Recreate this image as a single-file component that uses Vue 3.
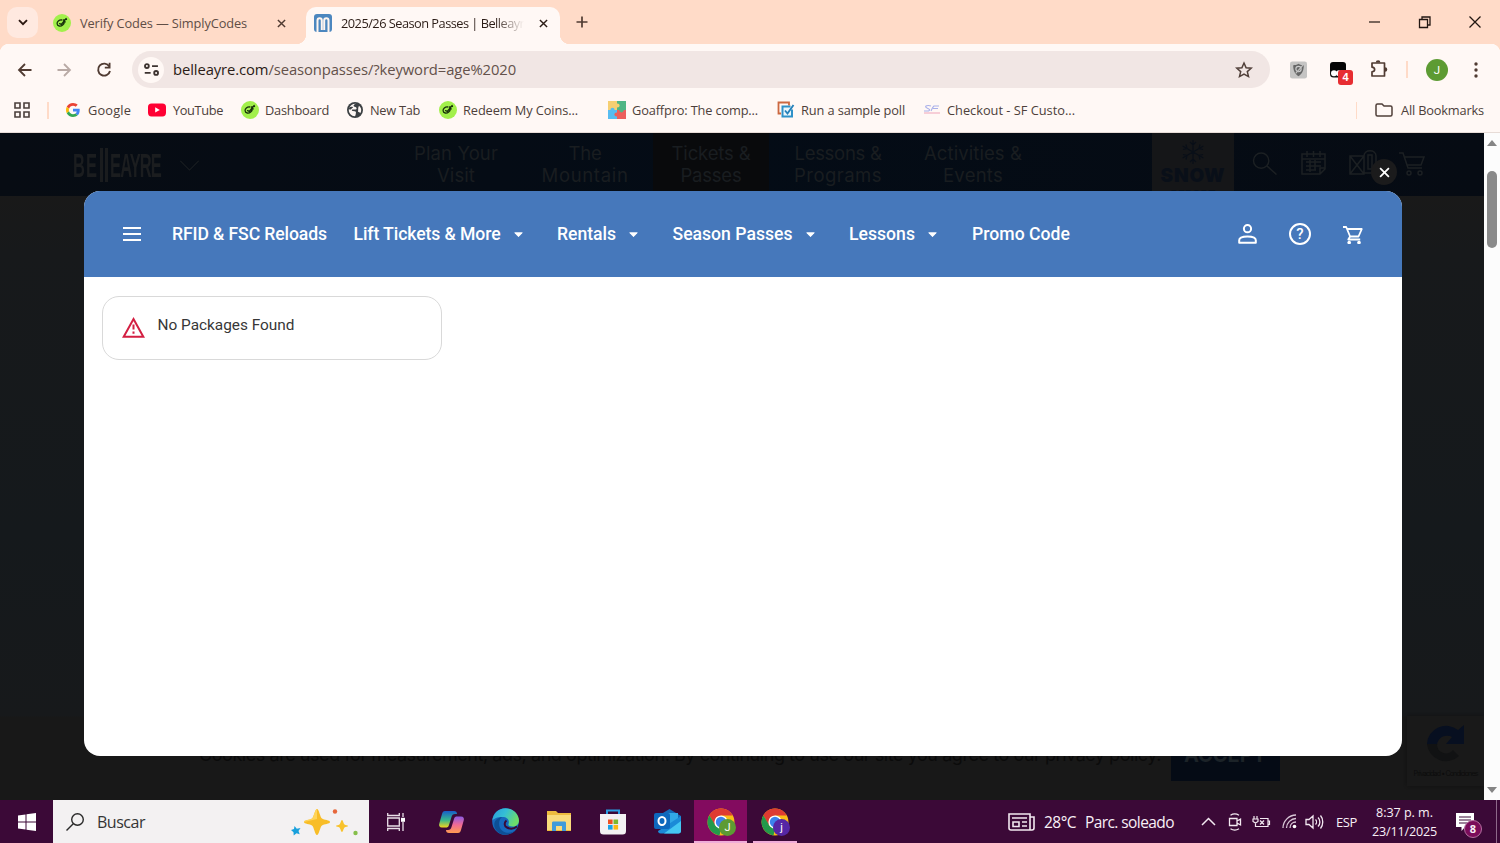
<script setup>
// Tracks a label out or in so that it fills the given width in pixels.
const vFit = {
  mounted(el, { value }) {
    const natural = el.getBoundingClientRect().width
    el.style.letterSpacing = `${(value - natural) / el.textContent.length}px`
  },
}

const bookmarks = [
  { icon: 'google', label: 'Google', w: 43, cls: 'b-google' },
  { icon: 'youtube', label: 'YouTube', w: 50, cls: 'b-youtube' },
  { icon: 'simply', label: 'Dashboard', w: 64, cls: 'b-dash' },
  { icon: 'globe', label: 'New Tab', w: 50, cls: 'b-newtab' },
  { icon: 'simply', label: 'Redeem My Coins...', w: 115, cls: 'b-redeem' },
  { icon: 'puzzle', label: 'Goaffpro: The comp...', w: 126, cls: 'b-goaff' },
  { icon: 'poll', label: 'Run a sample poll', w: 104, cls: 'b-poll' },
  { icon: 'sf', label: 'Checkout - SF Custo...', w: 128, cls: 'b-sf' },
]

const siteNav = [
  { a: 'Plan Your', aw: 84, b: 'Visit', bw: 38, cls: 'n1' },
  { a: 'The', aw: 33, b: 'Mountain', bw: 87, cls: 'n2' },
  { a: 'Tickets &', aw: 79, b: 'Passes', bw: 61, cls: 'n3' },
  { a: 'Lessons &', aw: 87, b: 'Programs', bw: 88, cls: 'n4' },
  { a: 'Activities &', aw: 98, b: 'Events', bw: 60, cls: 'n5' },
]

const storeNav = [
  { label: 'RFID & FSC Reloads', w: 155, cell: 'm1' },
  { label: 'Lift Tickets & More', w: 147, cell: 'm2', menu: true },
  { label: 'Rentals', w: 59, cell: 'm3', menu: true },
  { label: 'Season Passes', w: 120, cell: 'm4', menu: true },
  { label: 'Lessons', w: 66, cell: 'm5', menu: true },
  { label: 'Promo Code', w: 98, cell: 'm6' },
]
</script>

<template>
  <div class="screen">
    <svg class="defs" width="0" height="0">
      <defs>
        <symbol id="simply" viewBox="0 0 18 18">
          <circle cx="9" cy="9" r="9" fill="#a2f04b" />
          <path d="M8.900 6C6 5.700 3.900 7.600 4.100 9.800c.2 2.600 3.600 2.900 5.600 1.200 1.300-1.100 1.700-2.500 1.600-3.800M6.600 9.600l1.700.7 4.900-5.800M10.600 6l2.900-.6M10.800 8.200l1.500-.4" fill="none" stroke="#17310b" stroke-width="1.300" stroke-linecap="round" stroke-linejoin="round" />
        </symbol>
        <symbol id="google" viewBox="0 0 48 48">
          <path fill="#EA4335" d="M24 9.500c3.540 0 6.710 1.220 9.210 3.600l6.850-6.850C35.900 2.380 30.470 0 24 0 14.620 0 6.510 5.380 2.560 13.220l7.980 6.190C12.430 13.720 17.740 9.500 24 9.500z" />
          <path fill="#4285F4" d="M46.980 24.550c0-1.570-.15-3.090-.38-4.550H24v9.020h12.940c-.58 2.960-2.260 5.480-4.780 7.180l7.730 6c4.510-4.180 7.090-10.360 7.090-17.650z" />
          <path fill="#FBBC05" d="M10.530 28.590c-.48-1.450-.76-2.990-.76-4.590s.27-3.140.76-4.590l-7.980-6.190C.92 16.460 0 20.120 0 24s.92 7.540 2.560 10.780l7.970-6.190z" />
          <path fill="#34A853" d="M24 48c6.480 0 11.930-2.130 15.890-5.810l-7.730-6c-2.150 1.450-4.920 2.300-8.160 2.300-6.260 0-11.570-4.220-13.470-9.910l-7.980 6.190C6.510 42.620 14.620 48 24 48z" />
        </symbol>
        <symbol id="youtube" viewBox="0 0 18 18">
          <rect x="0" y="2.400" width="18" height="13" rx="3.600" fill="#ff0033" />
          <path d="M7.200 6.200v5.400l4.600-2.700z" fill="#fff" />
        </symbol>
        <symbol id="globe" viewBox="0 0 16 16">
          <circle cx="8" cy="8" r="8" fill="#3c4043" />
          <path d="M9 1.700C6.800 2 6 3.600 7 4.600c.8.700 2 .3 2.500 1.300.4.900-.5 1.600-1.600 1.600H5.500c-1 .2-.8 1.500.2 1.600l2 .2c1.100 0 1.400.9 1.200 1.600-.3 1 .1 2-1.100 3.400C4.400 14 1.800 11.300 1.800 8c0-.6.1-1.200.3-1.800C3 3.400 5.600 1.500 9 1.700z" fill="#fff8f5" />
          <path d="M2.300 5.500C4 4 4.700 5.300 6.200 4.800 6 6 4.800 6 4.200 7.200 3.500 8 2.600 7 1.800 7.200z" fill="#3c4043" />
          <path d="M12 3.800c1.400 1.100 2.200 2.500 2.200 4.200 0 1.200-.3 2.300-1 3.300-.6-1.100-1.200-1.200-2.200-1.500.4-2-.2-4.200 1-6z" fill="#fff8f5" />
        </symbol>
        <symbol id="puzzle" viewBox="0 0 18 18">
          <rect width="9" height="9" fill="#f6cf72" /><rect x="9" width="9" height="9" fill="#4fb684" />
          <rect y="9" width="9" height="9" fill="#58bdf1" /><rect x="9" y="9" width="9" height="9" fill="#ec5f5c" />
          <circle cx="9.500" cy="4.500" r="2.100" fill="#f6cf72" /><circle cx="4.500" cy="8.800" r="2.100" fill="#58bdf1" />
          <circle cx="8.500" cy="13.500" r="2.100" fill="#ec5f5c" /><circle cx="13.500" cy="9.300" r="2.100" fill="#4fb684" />
        </symbol>
        <symbol id="poll" viewBox="0 0 18 18">
          <path d="M4 12.500H1.500V1.500H12v3" fill="none" stroke="#cc6840" stroke-width="1.800" />
          <path d="M15 8.500v7H5.500v-10h8" fill="#eaf6fc" stroke="#2f91c8" stroke-width="2" />
          <path d="M8 9.500l2.500 3L16.500 4" fill="none" stroke="#2581ba" stroke-width="1.900" />
        </symbol>
        <symbol id="sf" viewBox="0 0 18 18">
          <path d="M8 5C5 4 1.500 4.800 3 6.300S8.500 8.300 5.500 10H1M16 5h-5c-2 1.500-2 3.500-3 5M10 7.500h5" fill="none" stroke="#a9b0ea" stroke-width="1.100" />
          <path d="M1 12h16" stroke="#f3b6c6" stroke-width="1.300" />
        </symbol>
        <symbol id="cross" viewBox="0 0 10 10"><path d="M1 1l8 8M9 1L1 9" fill="none" stroke="currentColor" stroke-width="1.600" /></symbol>
        <symbol id="cart" viewBox="0 0 20 18">
          <path d="M0 1h3.200l3.900 9.500h8.400L18.800 3H4.200M7.100 10.500L5.300 13.500h11.900" fill="none" stroke="currentColor" stroke-width="1.800" stroke-linejoin="round" />
          <circle cx="6.200" cy="16.500" r="1.800" fill="currentColor" /><circle cx="16" cy="16.500" r="1.800" fill="currentColor" />
        </symbol>
        <symbol id="chrome" viewBox="0 0 28 28">
          <circle cx="14" cy="14" r="13.500" fill="#f9bd16" />
          <path d="M14 .5A13.500 13.500 0 0 1 25.700 7.500H14L8 17.500 2.300 7.200A13.500 13.500 0 0 1 14 .5z" fill="#df3b31" />
          <path d="M2.300 7.200L8.400 17.500 14 20.500 12.500 27.400A13.500 13.500 0 0 1 2.300 7.200z" fill="#239a4b" />
          <circle cx="14" cy="14" r="6.600" fill="#fff" /><circle cx="14" cy="14" r="5.200" fill="#3d83ec" />
        </symbol>
      </defs>
    </svg>

    <!-- Tab strip -->
    <header class="tabs">
      <button class="tab-search"><svg viewBox="0 0 10 7"><path d="M1 1.200l4 4 4-4" fill="none" stroke="#2b1710" stroke-width="1.900" /></svg></button>
      <div class="tab idle">
        <svg class="fav"><use href="#simply" /></svg>
        <span v-fit="167" class="t1">Verify Codes — SimplyCodes</span>
        <svg class="x"><use href="#cross" /></svg>
      </div>
      <div class="tab active">
        <svg class="fav" viewBox="0 0 18 18"><rect width="18" height="18" rx="3" fill="#4c87bf" /><path d="M3.500 18V6.500c0-3 4.300-3 4.300 0V16M10.200 16V6.500c0-3 4.300-3 4.300 0V18" fill="none" stroke="#fff6f0" stroke-width="2" /></svg>
        <span class="title-wrap"><span v-fit="190" class="t2">2025/26 Season Passes | Belleayre</span></span>
        <svg class="x"><use href="#cross" /></svg>
      </div>
      <svg class="plus" viewBox="0 0 12 12"><path d="M6 .5v11M.5 6h11" stroke="#503b32" stroke-width="1.700" /></svg>
      <svg class="winctl" viewBox="0 0 112 14">
        <path d="M0 7h11" stroke="#221712" stroke-width="1.200" />
        <path d="M50.500 4.500h8v8h-8zM53 4V2h8v8h-2" fill="none" stroke="#221712" stroke-width="1.300" />
        <path d="M100.500 1.500l11 11M111.500 1.500l-11 11" stroke="#221712" stroke-width="1.300" />
      </svg>
    </header>

    <!-- Toolbar and bookmarks -->
    <section class="chrome">
      <div class="toolbar">
        <svg class="arrow back" viewBox="0 0 14 14"><path d="M13.500 7H1.500M7 1L1 7l6 6" fill="none" stroke="#503b32" stroke-width="1.800" /></svg>
        <svg class="arrow fwd" viewBox="0 0 14 14"><path d="M.5 7h12M7 1l6 6-6 6" fill="none" stroke="#b9aaa5" stroke-width="1.800" /></svg>
        <svg class="reload" viewBox="0 0 14 15"><path d="M12.300 4.500A6 6 0 1 0 13 9" fill="none" stroke="#503b32" stroke-width="1.900" /><path d="M13.500.8v5.700H7.800V4.800h3.900V.8z" fill="#503b32" /></svg>
        <div class="omni">
          <div class="site"><svg viewBox="0 0 14 12"><g fill="none" stroke="#3d3330" stroke-width="1.700"><circle cx="2.700" cy="2.800" r="1.800" /><path d="M7.500 2.800H13M.7 9.200h5.500" /><circle cx="11.300" cy="9.200" r="1.800" /></g></svg></div>
          <span v-fit="343" class="url"><b>belleayre.com</b>/seasonpasses/?keyword=age%2020</span>
          <svg class="star" viewBox="0 0 18 18"><path d="M9 2l2.100 4.700 5.100.5-3.900 3.400 1.200 5L9 13l-4.500 2.600 1.200-5-3.900-3.400 5.100-.5z" fill="none" stroke="#503f39" stroke-width="1.500" /></svg>
        </div>
        <svg class="ext shield" viewBox="0 0 18 18"><rect width="18" height="18" rx="2.500" fill="#c5c4c3" /><path d="M9 2.500c2 1.200 3.600 1.500 5.600 1.500 0 5-1.300 9-5.600 11.500C4.700 13 3.400 9 3.400 4 5.400 4 7 3.700 9 2.500z" fill="#676767" /><circle cx="9" cy="8" r="2.800" fill="none" stroke="#ccc" stroke-width="1.200" /><path d="M6 12.500l8-9" stroke="#c5c4c3" stroke-width="1.200" /></svg>
        <div class="ext mask">
          <svg viewBox="0 0 16 16"><path d="M3 0h10a3 3 0 0 1 3 3v9H0V3a3 3 0 0 1 3-3z" fill="#050505" /><path d="M0 9v3a3.500 3.500 0 0 0 3.500 3.500H8V9z" fill="#111" /><circle cx="4" cy="11.300" r="3" fill="#fff" /><circle cx="9" cy="11.300" r="3" fill="#fff" /></svg>
          <span class="count">4</span>
        </div>
        <svg class="ext puzzle" viewBox="0 0 18 20"><path d="M2 4h12.500v13H2v-4.200c3.500-.3 3.500-4.300 0-4.600z" fill="none" stroke="#503b32" stroke-width="1.700" stroke-linejoin="round" /><path d="M5.800 3.500a2.300 2.300 0 0 1 4.600 0zM15 8.200a2.300 2.300 0 0 1 0 4.600z" fill="#503b32" /></svg>
        <i class="sep s1"></i>
        <div class="avatar">J</div>
        <svg class="dots" viewBox="0 0 4 16"><g fill="#503b32"><circle cx="2" cy="2" r="1.700" /><circle cx="2" cy="8" r="1.700" /><circle cx="2" cy="14" r="1.700" /></g></svg>
      </div>
      <nav class="marks">
        <svg class="apps" viewBox="0 0 16 16"><g fill="none" stroke="#4b3f3b" stroke-width="1.600"><path d="M1 1h5v5H1zM10 1h5v5h-5zM1 10h5v5H1zM10 10h5v5h-5z" /></g></svg>
        <i class="sep s2"></i>
        <a v-for="b in bookmarks" :key="b.label" :class="['mark', b.cls]">
          <svg><use :href="'#' + b.icon" /></svg><span v-fit="b.w">{{ b.label }}</span>
        </a>
        <i class="sep s3"></i>
        <a class="mark all">
          <svg viewBox="0 0 18 14"><path d="M1 11.500v-9C1 1.500 1.500 1 2.500 1H7l2 2h6.500c1 0 1.500.5 1.500 1.500v7c0 1-.5 1.500-1.500 1.500h-13C1.500 13 1 12.500 1 11.500z" fill="none" stroke="#503f39" stroke-width="1.500" /></svg>
          <span v-fit="83">All Bookmarks</span>
        </a>
      </nav>
    </section>

    <!-- Dimmed site with store dialog -->
    <main class="view">
      <div class="page">
        <div class="site-head">
          <div class="logo"><span v-fit="25">BE</span><i></i><i></i><span v-fit="51">EAYRE</span></div>
          <svg class="chev" viewBox="0 0 22 12"><path d="M1 1l10 10L21 1" fill="none" stroke="currentColor" stroke-width="1.200" /></svg>
          <div v-for="n in siteNav" :key="n.a" :class="['sn', n.cls]"><span v-fit="n.aw">{{ n.a }}</span><span v-fit="n.bw">{{ n.b }}</span></div>
          <div class="snow">
            <svg viewBox="0 0 24 24"><path d="M12 0v24M1.600 6l20.800 12M1.600 18L22.400 6M9 2l3 3 3-3M9 22l3-3 3 3M2 9.500l4-1-1-4M22 14.500l-4 1 1 4M2 14.500l4 1-1 4M22 9.500l-4-1 1-4" fill="none" stroke="currentColor" stroke-width="1.200" /></svg>
            <strong v-fit="65">SNOW</strong><small v-fit="45">REPORT</small>
          </div>
          <svg class="hi search" viewBox="0 0 26 24"><circle cx="9" cy="9" r="8" /><path d="M15 14.500l10 9" /></svg>
          <svg class="hi cal" viewBox="0 0 27 26"><path d="M2 4h23v15l-5 5H2zM2 9h23M7 1v6M13.500 1v6M20 1v6M6 12h15M6 16h15M6 20h10M10 10v12M15 10v10M25 18h-5v6" /></svg>
          <svg class="hi map" viewBox="0 0 28 26"><path d="M1 6h14v18H1zM1 6l14 18M15 6L1 24M15 6c0-7 12-7 12 0v17H15" /><path d="M19 5h4v14h-4z" /></svg>
          <svg class="hi shop" viewBox="0 0 26 24"><path d="M0 1h4l5 15h14M5 5h20l-3 8H8" /><circle cx="10" cy="21" r="2" /><circle cx="21" cy="21" r="2" /></svg>
        </div>
        <div class="cookies">
          <span v-fit="962" class="notice">Cookies are used for measurement, ads, and optimization. By continuing to use our site you agree to our privacy policy.</span>
          <div class="accept"><span v-fit="82">ACCEPT</span></div>
          <div class="captcha">
            <svg viewBox="0 0 42 42"><path d="M2 20A19 19 0 0 1 33 6l6-5v19H21l6-7a10 10 0 0 0-15 8z" fill="#070f20" /><path d="M2 20h10a9 9 0 0 0 16 6l6 6A19 19 0 0 1 2 20z" fill="#111213" /></svg>
            <span v-fit="64">Privacidad • Condiciones</span>
          </div>
        </div>

        <div class="dialog">
          <div class="bar">
            <svg class="burger" viewBox="0 0 18 14"><path d="M0 1h18M0 7h18M0 13h18" stroke="#fff" stroke-width="2" /></svg>
            <a v-for="m in storeNav" :key="m.label" :class="['item', m.cell]">
              <span v-fit="m.w">{{ m.label }}</span>
              <svg v-if="m.menu" viewBox="0 0 10 6"><path d="M.8.800h8.400L5 5.200z" fill="#fff" stroke="#fff" stroke-width="1" stroke-linejoin="round" /></svg>
            </a>
            <svg class="user" viewBox="0 0 19 20"><g fill="none" stroke="#fff" stroke-width="2"><circle cx="9.500" cy="4.700" r="3.600" /><path d="M1.200 18.800v-2.600c0-5 16.600-5 16.600 0v2.600z" stroke-linejoin="round" /></g></svg>
            <div class="help">?</div>
            <svg class="basket"><use href="#cart" /></svg>
          </div>
          <div class="card">
            <svg viewBox="0 0 23 21"><path d="M11.500 2L21.300 19.700H1.700z" fill="none" stroke="#d31f42" stroke-width="2" /><path d="M11.500 7.500v5M11.500 14.500v2.200" stroke="#d31f42" stroke-width="2" /></svg>
            <span v-fit="137">No Packages Found</span>
          </div>
        </div>
        <button class="close"><svg><use href="#cross" /></svg></button>
      </div>
      <aside class="scroll">
        <svg class="up" viewBox="0 0 10 6"><path d="M0 6l5-6 5 6z" fill="#858585" /></svg>
        <i></i>
        <svg class="down" viewBox="0 0 10 6"><path d="M0 0l5 6 5-6z" fill="#858585" /></svg>
      </aside>
    </main>

    <!-- Taskbar -->
    <footer class="taskbar">
      <svg class="win" viewBox="0 0 18 18"><path d="M0 2.500l7.500-1v7H0zM8.500 1.300L18 0v8.500H8.500zM0 9.500h7.500v7L0 15.500zM8.500 9.500H18V18l-9.500-1.300z" fill="#fff" /></svg>
      <div class="find">
        <svg class="lens" viewBox="0 0 18 18"><circle cx="11.500" cy="6.500" r="5.800" fill="none" stroke="#2a2a2a" stroke-width="1.400" /><path d="M7.500 10.500L.5 17.500" stroke="#2a2a2a" stroke-width="1.400" /></svg>
        <span v-fit="48">Buscar</span>
        <svg class="sparks" viewBox="0 0 68 28">
          <path d="M26 1c2 0 3 8 5 9.500S39 12 39 14s-6 2-8 3.500S28 27 26 27s-3-8-5-9.500S13 16 13 14s6-2 8-3.500S24 1 26 1z" fill="#f8bd27" />
          <path d="M26 1c-2 0-3 8-5 9.500S13 12 13 14l13-3z" fill="#ffd458" />
          <path d="M51 12c1 0 1.500 3.500 2.500 4.500S57 17 57 18s-2.500.5-3.500 1.500S52 24 51 24s-1.500-3.500-2.500-4.500S45 19 45 18s2.500-.5 3.500-1.500S50 12 51 12z" fill="#f8c22c" />
          <path d="M3.500 18l2.300 2.800 3.700-.8-2 3 1.200 3.300-3.200-1L2.700 27.500l-.2-3.200L0 22l3-1z" fill="#18a0dc" />
          <circle cx="44" cy="3.500" r="2.200" fill="#e7673b" /><circle cx="64.500" cy="25" r="2.200" fill="#86bf4b" />
        </svg>
      </div>
      <svg class="taskview" viewBox="0 0 18 18"><g fill="none" stroke="#eadfe8" stroke-width="1.300"><path d="M.7 0v2.500h11.600V0M.7 5h11.600v8H.7zM.7 18v-2.500h11.600V18M16 0v4M16 9v9" /></g><rect x="14" y="4.800" width="4" height="4" fill="#fff" /></svg>
      <svg class="copilot" viewBox="0 0 25 24">
        <defs>
          <linearGradient id="ca" x2="0" y2="1"><stop stop-color="#175dc9" /><stop offset=".55" stop-color="#37b88c" /><stop offset="1" stop-color="#f2d51d" /></linearGradient>
          <linearGradient id="cb" x2="0" y2="1"><stop stop-color="#8c5be3" /><stop offset=".5" stop-color="#f06a95" /><stop offset="1" stop-color="#ff9c50" /></linearGradient>
        </defs>
        <path d="M6 1h9c2 0 3 1 3 3h-2c-2 0-3 1-3.500 3L10 15c-.5 2-1.500 2.500-3.500 2.500H3c-2.500 0-3.500-2-2.700-4L3 4c.5-2 1.300-3 3-3z" fill="url(#ca)" />
        <path d="M19 23h-9c-2 0-3-1-3-3h2c2 0 3-1 3.500-3L15 9c.5-2 1.500-2.500 3.500-2.500H22c2.500 0 3.500 2 2.700 4L22 20c-.5 2-1.300 3-3 3z" fill="url(#cb)" />
      </svg>
      <svg class="edge" viewBox="0 0 27 27">
        <defs><linearGradient id="ea" x2="1" y2=".4"><stop stop-color="#2b9bdc" /><stop offset=".5" stop-color="#34bfd6" /><stop offset="1" stop-color="#6ddd6a" /></linearGradient></defs>
        <circle cx="13.500" cy="13.500" r="13.300" fill="#1769bd" />
        <path d="M.3 13C1 5 6.500.2 13.500.2 21 .2 27 6 27 12.500c0 4-3 6-6.500 6-3 0-4.500-1-4-2.500 1.500-4-1.500-7-6-7C5.500 9 1.500 10.500.3 13z" fill="url(#ea)" />
        <path d="M10.500 9C6 11 6 19 10 22.500c4 3.500 11 3 15-1.500-4 5-14 8-19 3C0 19 1 10 10.500 9z" fill="#0d4f96" />
        <path d="M14.500 12.500c-2.500 2-2.500 5.500.5 7 3 1.600 7 1.300 10-1" fill="none" stroke="#3a0a35" stroke-width="2" />
      </svg>
      <svg class="folder" viewBox="0 0 24 21"><path d="M0 0h9l2 2h13v18H0z" fill="#eebb3f" /><path d="M0 4h24v15H0z" fill="#fadb7c" /><path d="M5 20v-8c0-1 .5-1.500 1.500-1.500h11c1 0 1.500.5 1.500 1.500v8h-4v-5H9v5z" fill="#3f9bda" /></svg>
      <svg class="store" viewBox="0 0 26 26"><path d="M7 6V1.500h12V6" fill="none" stroke="#2b9de0" stroke-width="2" /><path d="M0 5h26v17c0 2.500-1 3.500-3.500 3.500h-19C1 25.500 0 24.500 0 22z" fill="#f3f1f3" /><path d="M8 10.500h4.600v4.600H8z" fill="#ee5021" /><path d="M13.500 10.500h4.600v4.600h-4.600z" fill="#7cb82e" /><path d="M8 16h4.600v4.600H8z" fill="#19a2e6" /><path d="M13.500 16h4.600v4.600h-4.600z" fill="#fdb912" /></svg>
      <svg class="outlook" viewBox="0 0 27 25"><path d="M4 7L15.500 0 27 7v5H4z" fill="#1469b8" /><path d="M7 4h17v12H7z" fill="#31a7e6" /><path d="M27 7v15c0 1.500-1 2.500-2.500 2.500h-18C5 24.500 4 23.500 4 22z" fill="#1b8ad7" /><path d="M10 24.500L27 12v10c0 1.500-1 2.500-2.500 2.500z" fill="#45c7f2" /><rect y="4" width="16" height="16" rx="2" fill="#0d68bd" /><ellipse cx="8" cy="12" rx="3.500" ry="4" fill="none" stroke="#fff" stroke-width="2" /></svg>
      <div class="app on"><svg><use href="#chrome" /></svg><b class="green">J</b></div>
      <div class="app second"><svg><use href="#chrome" /></svg><b class="violet">j</b></div>
      <svg class="news" viewBox="0 0 27 18"><g fill="none" stroke="#f3e9f1" stroke-width="1.600"><path d="M1 1h21v16H3c-1.500 0-2-.8-2-2zM22 4h4v11c0 1.300-.7 2-2 2h-3M4 5h15M14 9h5M14 13h5" /><path d="M5 9h6v4.500H5z" /></g></svg>
      <span v-fit="32" class="temp">28°C</span>
      <span v-fit="89" class="sky">Parc. soleado</span>
      <svg class="tray-up" viewBox="0 0 15 9"><path d="M1 8l6.500-6.500L14 8" fill="none" stroke="#f3e9f1" stroke-width="1.500" /></svg>
      <svg class="tray cam" viewBox="0 0 14 18"><g fill="none" stroke="#f3e9f1" stroke-width="1.300"><path d="M1.500 5.500h7.500v7H1.500zM9 8l3.500-2v6L9 10M2.500 2.200c2.500-1.600 6-1.600 8.500 0M2.500 15.800c2.500 1.600 6 1.600 8.500 0" /></g></svg>
      <svg class="tray plug" viewBox="0 0 18 14"><g fill="none" stroke="#f3e9f1" stroke-width="1.200"><path d="M2 1v3M5 1v3M1 4h5v2.500L3.500 8 1 6.500zM3.500 8v3.500H16v-8H8M16 6h1.500v3.500H16M8 5.500l4 4M12 5.500l-4 4" /></g></svg>
      <svg class="tray wifi" viewBox="0 0 15 15"><g fill="none" stroke="#d9c7d7" stroke-width="1.300"><path d="M1 14C1 7 7 1 14 1M4.500 14c0-5 4.500-9.500 9.500-9.500M8 14c0-3.500 2.500-6 6-6" /></g><circle cx="12.500" cy="12.500" r="1.800" fill="#fff" /></svg>
      <svg class="tray vol" viewBox="0 0 18 16"><path d="M1 5.500h3L8 2v12l-4-3.500H1zM10.500 5.500c1.300 1.300 1.300 3.700 0 5M13 3.500c2.500 2.500 2.500 6.500 0 9M15.500 1.500c3 3.500 3 9.500 0 13" fill="none" stroke="#f3e9f1" stroke-width="1.300" /></svg>
      <span v-fit="21" class="lang">ESP</span>
      <div class="clock"><span v-fit="57">8:37 p. m.</span><span v-fit="65">23/11/2025</span></div>
      <div class="notes"><svg viewBox="0 0 18 18"><path d="M0 0h18v14H9l-3.500 4v-4H0z" fill="#fff" /><path d="M3 4h12M3 7h12M3 10h8" stroke="#3b0937" stroke-width="1.200" /></svg><b>8</b></div>
      <i class="peek"></i>
    </footer>
  </div>
</template>

<style>
body { overflow: hidden; background: #181818; }
</style>

<style scoped>
* { box-sizing: border-box; }
svg { display: block; flex: none; overflow: visible; }
span, strong, small { white-space: nowrap; flex: none; }
button { border: 0; padding: 0; }
.defs { position: absolute; }
.screen { width: 1500px; height: 843px; display: grid; grid-template-rows: 44px 89px 667px 43px; overflow: hidden; font-family: "Open Sans", "Noto Sans", sans-serif; font-size: 12.800px; color: #4d3f3a; }

.tabs { background: #ffdbc8; display: flex; align-items: center; padding-left: 7px; }
.tab-search { width: 31px; height: 31px; margin-top: 1px; border-radius: 10px; background: #ffe9e0; display: grid; place-items: center; }
.tab-search svg { width: 10px; height: 7px; }
.tab { display: flex; align-items: center; height: 37px; margin-top: 7px; padding-bottom: 5px; }
.fav { width: 18px; height: 18px; }
.x { width: 9px; height: 9px; color: #503b32; }
.idle { width: 268px; padding-left: 15px; }
.idle span { margin-left: 9px; color: #604d45; }
.idle .x { margin-left: 30px; }
.active { position: relative; width: 254px; padding-left: 8px; background: #fff8f5; border-radius: 10px 10px 0 0; }
.active::before, .active::after { content: ""; position: absolute; bottom: 0; width: 10px; height: 10px; }
.active::before { left: -10px; background: radial-gradient(circle at 0 0, transparent 10px, #fff8f5 10.500px); }
.active::after { right: -10px; background: radial-gradient(circle at 100% 0, transparent 10px, #fff8f5 10.500px); }
.title-wrap { width: 183px; margin-left: 9px; overflow: hidden; -webkit-mask-image: linear-gradient(90deg, #000 84%, transparent); mask-image: linear-gradient(90deg, #000 84%, transparent); color: #2c1d17; }
.title-wrap span { display: inline-block; }
.active .x { margin-left: 15px; color: #2c1d17; }
.plus { width: 12px; height: 12px; margin: 0 0 0 16px; }
.winctl { width: 112px; height: 14px; margin: 0 0 0 781px; }

.chrome { background: radial-gradient(circle at 9px 9px, #fff8f5 9px, #ffdbc8 9.500px) 0 0 / 9px 9px no-repeat, radial-gradient(circle at 0 9px, #fff8f5 9px, #ffdbc8 9.500px) 100% 0 / 9px 9px no-repeat, #fff8f5; border-bottom: 1px solid #e7dcd7; }
.toolbar { height: 51px; display: flex; align-items: center; padding-left: 18px; }
.arrow { width: 14px; height: 14px; }
.fwd { margin-left: 25px; }
.reload { width: 14px; height: 15px; margin-left: 26px; }
.omni { width: 1138px; height: 37px; margin-left: 21px; border-radius: 19px; background: #f1e6e4; display: flex; align-items: center; padding-left: 6px; }
.site { width: 26px; height: 26px; border-radius: 50%; background: #fff8f5; display: grid; place-items: center; }
.site svg { width: 15px; height: 13px; }
.url { margin: -1px 0 0 9px; font-size: 14.800px; color: #63514a; }
.url b { font-weight: 400; color: #2b1c16; }
.star { width: 18px; height: 18px; margin-left: 719px; }
.shield { width: 17px; height: 18px; margin-left: 20px; }
.mask { position: relative; width: 16px; height: 16px; margin-left: 23px; }
.mask svg { width: 16px; height: 16px; }
.count { position: absolute; left: 8px; top: 8px; width: 15px; height: 15px; border-radius: 3px; background: #e72d31; color: #fff; font: bold 11px/15px "Liberation Sans", sans-serif; text-align: center; }
.puzzle { width: 18px; height: 20px; margin: -2px 0 0 24px; }
.sep { width: 2px; height: 17px; background: #ffdbc8; flex: none; }
.s1 { margin-left: 18px; }
.avatar { width: 22px; height: 22px; margin-left: 18px; border-radius: 50%; background: #5d9b33; color: #fff; font: 11.500px/22px Roboto, sans-serif; text-align: center; }
.dots { width: 4px; height: 16px; margin-left: 26px; }
.marks { height: 30px; display: flex; align-items: center; padding-left: 14px; }
.apps { width: 16px; height: 16px; }
.s2 { margin-left: 17px; margin-right: 17px; }
.mark { display: flex; align-items: center; flex: none; }
.mark svg { width: 18px; height: 18px; }
.mark span { margin-left: 6px; }
.b-google { width: 82px; }
.b-google svg { width: 14px; height: 14px; }
.b-google span { margin-left: 8px; }
.b-youtube { width: 93px; }
.b-youtube span { margin-left: 7px; }
.b-dash { width: 106px; }
.b-newtab { width: 92px; }
.b-newtab svg { width: 16px; height: 16px; }
.b-newtab span { margin-left: 7px; }
.b-redeem { width: 169px; }
.b-goaff { width: 169px; }
.b-poll { width: 146px; }
.b-sf { width: 433px; }
.s3 { width: 1px; }
.all { margin-left: 18px; }
.all svg { width: 18px; height: 14px; }
.all span { margin-left: 8px; }

.view { display: flex; min-height: 0; }
.page { position: relative; width: 1484px; height: 667px; background: linear-gradient(#191919 0, #191919 62px, #17191b 120px, #15191c 400px, #17191b 583px, #181818 584px); display: flex; flex-direction: column; justify-content: space-between; overflow: hidden; font-family: Inter, "Open Sans", sans-serif; }
.site-head { height: 63px; background: linear-gradient(90deg, #070c13, #040c16 50%, #060b13); display: flex; color: #191d20; padding-left: 73px; flex: none; }
.logo { display: flex; width: 89px; height: 34px; margin-top: 15px; align-items: center; font: bold 16.500px/19px "Liberation Sans", sans-serif; color: #1b1d1f; }
.logo span { transform: scaleY(2.050); }
.logo i { width: 3px; height: 34px; background: #1a1c1e; margin-left: 2px; }
.logo i + span { margin-left: 2px; }
.chev { width: 21px; height: 11px; margin: 27px 0 0 17px; }
.sn { display: flex; flex-direction: column; align-items: center; font-size: 18.500px; line-height: 21.500px; padding-top: 10px; flex: none; }
.n1 { width: 110px; margin-left: 201px; }
.n2 { width: 110px; margin-left: 19px; }
.n3 { width: 116px; margin-left: 13px; background: #090a0c; }
.n4 { width: 110px; margin-left: 14px; }
.n5 { width: 120px; margin-left: 20px; }
.snow { width: 82px; height: 63px; margin-left: 119px; background: #151618; display: flex; flex-direction: column; align-items: center; padding-top: 7px; color: #090f18; flex: none; }
.snow svg { width: 24px; height: 24px; }
.snow strong { font-size: 19px; font-weight: 900; line-height: 20px; margin-top: 2px; }
.snow small { font-size: 11px; font-weight: 700; line-height: 11px; margin-top: 3px; }
.hi { fill: none; stroke: #1c2023; stroke-width: 1.500px; }
.search { width: 26px; height: 23px; margin: 19px 0 0 18px; }
.cal { width: 27px; height: 26px; margin: 17px 0 0 22px; }
.map { width: 28px; height: 26px; margin: 17px 0 0 22px; }
.shop { width: 26px; height: 24px; margin: 19px 0 0 22px; }
.cookies { height: 84px; display: flex; padding-left: 199px; flex: none; }
.notice { font-size: 18px; line-height: 22px; margin-top: 28px; color: #0b0b0b; }
.accept { width: 109px; height: 51px; margin: 14px 0 0 10px; background: #050b15; color: #1c2328; font-size: 20px; font-weight: 700; line-height: 51px; padding-left: 13px; flex: none; }
.captcha { width: 77px; height: 70px; margin: 0 0 0 127px; background: #191919; box-shadow: 0 0 3px #111; display: flex; flex-direction: column; align-items: center; padding-top: 8px; color: #0c0c0c; font-size: 7px; flex: none; }
.captcha svg { width: 42px; height: 42px; }
.captcha span { margin-top: 3px; }

.dialog { position: absolute; left: 84px; top: 58px; width: 1318px; height: 565px; border-radius: 16px; background: #fff; overflow: hidden; font-family: Roboto, sans-serif; }
.bar { height: 86px; background: #4678bb; display: flex; align-items: center; padding-left: 39px; color: #fff; }
.burger { width: 18px; height: 14px; }
.item { display: flex; align-items: center; font-size: 17.600px; font-weight: 500; flex: none; }
.item svg { width: 9px; height: 5.500px; margin: 2px 0 0 13px; }
.m1 { width: 181.500px; margin-left: 31px; }
.m2 { width: 203.500px; }
.m3 { width: 115.500px; }
.m4 { width: 176.500px; }
.m5 { width: 123px; }
.m6 { width: 266px; }
.user { width: 19px; height: 20px; }
.help { width: 22px; height: 22px; margin: 0 0 0 32px; border: 2px solid #fff; border-radius: 50%; font-size: 15px; font-weight: 500; line-height: 18px; text-align: center; }
.basket { width: 20px; height: 18px; margin: 1px 0 0 32px; }
.card { width: 340px; height: 64px; margin: 19px 0 0 17.500px; border: 1px solid #d9d9d9; border-radius: 17px; display: flex; padding: 20px 0 0 19px; color: #373737; font-size: 15.400px; line-height: 18px; }
.card svg { width: 23px; height: 21px; }
.card span { margin: -1.500px 0 0 13px; }
.close { position: absolute; left: 1371px; top: 26px; width: 26px; height: 26px; border-radius: 50%; background: #1b1b1c; color: #fff; display: grid; place-items: center; }
.close svg { width: 11px; height: 11px; }
.scroll { width: 16px; height: 667px; background: #fcfcfc; display: flex; flex-direction: column; align-items: center; padding: 7px 0; }
.scroll svg { width: 10px; height: 6px; }
.scroll i { width: 10px; height: 77px; margin-top: 25px; border-radius: 5px; background: #8a8a8a; }
.down { margin-top: auto; }

.taskbar { background: #3b0937; display: flex; align-items: center; padding-left: 18px; color: #f8eff6; font-size: 15.500px; }
.taskbar > * { flex: none; }
.win { width: 18px; height: 18px; }
.find { width: 316px; height: 43px; margin-left: 17px; background: #f3f1f2; display: flex; align-items: center; padding-left: 13px; color: #353535; font-size: 16px; }
.lens { width: 18px; height: 18px; }
.find span { margin-left: 13px; }
.sparks { width: 68px; height: 28px; margin-left: 146px; }
.taskview { width: 18px; height: 18px; margin-left: 18px; }
.copilot { width: 25px; height: 24px; margin-left: 34px; }
.edge { width: 27px; height: 27px; margin-left: 28px; }
.folder { width: 24px; height: 21px; margin-left: 28px; }
.store { width: 26px; height: 26px; margin-left: 29px; }
.outlook { width: 27px; height: 25px; margin-left: 28px; }
.app { position: relative; width: 53px; height: 43px; padding: 8px 0 0 13px; border-bottom: 2px solid #efacd9; }
.app svg { width: 28px; height: 28px; }
.app b { position: absolute; left: 25px; top: 19px; width: 17px; height: 17px; border-radius: 50%; color: #fff; font: 11px/17px Roboto, sans-serif; text-align: center; }
.on { margin-left: 13px; background: #830b5f; }
.second { width: 44px; margin-left: 6px; padding-left: 8px; }
.second b { left: 20px; }
.green { background: #5d9b33; }
.violet { background: #5527a5; }
.news { width: 27px; height: 18px; margin-left: 211px; }
.temp { margin-left: 9px; }
.sky { margin-left: 9px; }
.tray-up { width: 15px; height: 9px; margin-left: 27px; }
.cam { width: 14px; height: 18px; margin-left: 12px; }
.plug { width: 18px; height: 14px; margin-left: 10px; }
.wifi { width: 15px; height: 15px; margin-left: 12px; }
.vol { width: 18px; height: 16px; margin-left: 8px; }
.lang { margin-left: 13px; font-size: 13px; }
.clock { width: 67px; margin: 1px 0 0 14px; display: flex; flex-direction: column; align-items: center; font-size: 12.600px; line-height: 19.500px; }
.notes { position: relative; width: 18px; height: 18px; margin-left: 18px; }
.notes svg { width: 18px; height: 18px; }
.notes b { position: absolute; left: 8px; top: 7px; width: 18px; height: 18px; border-radius: 50%; background: #7a0c5a; border: 1px solid #b470a0; font: bold 11px/16px "Open Sans", sans-serif; text-align: center; }
.peek { width: 1px; height: 43px; margin-left: 22px; background: #8d6989; }
</style>
